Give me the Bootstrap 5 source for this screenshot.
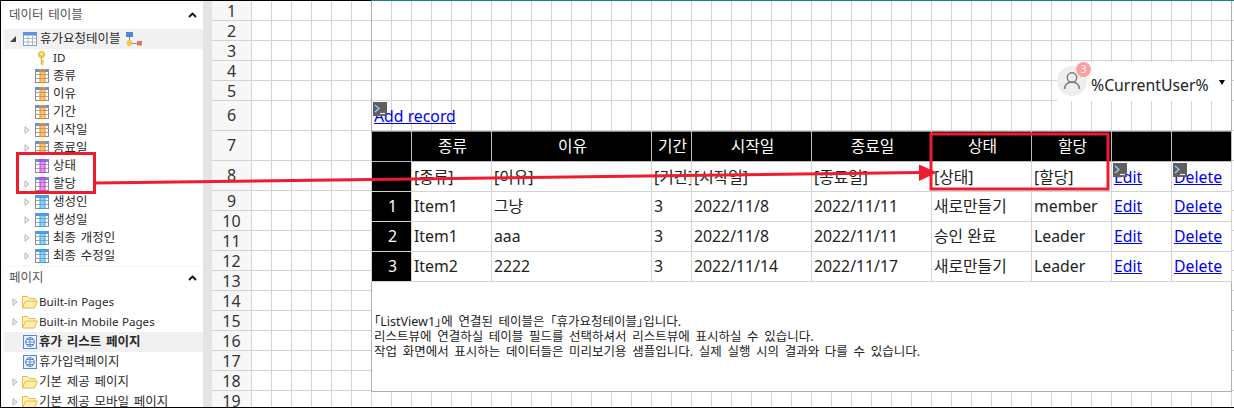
<!DOCTYPE html>
<html lang="ko">
<head>
<meta charset="utf-8">
<title>데이터 테이블</title>
<link href="https://cdn.jsdelivr.net/npm/bootstrap@5.3.0/dist/css/bootstrap.min.css" rel="stylesheet">
<style>
html,body{height:100%;margin:0;overflow:hidden;background:#fff}
body{font-family:"Noto Sans","Noto Sans CJK KR",sans-serif;color:#222}
.app{width:1234px;height:408px;background:#000;padding-top:1px;border-left:1px solid #000;border-bottom:1px solid #000;overflow:hidden;position:relative}
.top-accent{position:absolute;left:370px;right:0;top:0;height:1px;background:#16809f}
.pane{width:202px;flex:none;background:#fafafa;padding:3px 0 0 3px;font-size:12.5px;line-height:18px;word-spacing:1.5px}
.pane-head{height:21px;flex:none;padding:0 6px 0 5px;background:#fff;color:#555}
.pane-body{background:#fff;padding-top:4px;flex:none}
.pane-gap{height:2px;flex:none}
.node{height:18px;white-space:nowrap;color:#2a2a2a}
.node.tall{height:20px}
.node.sel{background:#f1f1f1}
.node.strong{font-weight:700}
.latin{font-size:11.6px;word-spacing:.5px}
.arrow{width:6px;height:8px;flex:none}
.lv1{padding-left:6px}
.lv2{padding-left:18px}
.lv2 .arrow{margin:0 5px 0 2px}
.lv2 .noarrow{width:13px;flex:none}
.col-ico{width:14px;height:14px;flex:none;margin-right:4px}
.key-ico{width:7px;height:14px;flex:none;margin:0 8px 0 3px}
.branch{padding-left:8px}
.leaf{padding-left:19px}
.leaf svg{margin-right:2px}
.branch .fold-ico{margin-right:1px}
.orange{color:#f28c1c}.purple{color:#c23fe0}.sky{color:#38a8ea}
.splitter{width:9px;flex:none;background:#e4e4e4}
.work{position:relative;flex:1 1 auto;min-width:0;background:#fff repeating-linear-gradient(90deg,transparent 0 19px,#d3d3d3 19px 20px)}
.sheet-row{border-bottom:1px solid #d3d3d3;height:20px;flex:none}
.sheet-row.big{height:30px}
.rowhead{width:40px;height:100%;background:#f7f7f7;border-right:1px solid #d3d3d3;text-align:center;font-size:16px;line-height:21px;color:#333}
.sheet-row.big .rowhead{line-height:29px}
.lv-panel{position:absolute;left:159px;top:0;width:861px;height:391px;border-left:1px solid #b0b0b0;border-right:1px solid #b0b0b0;border-bottom:1px solid #b0b0b0}
.spacer-top{height:61px;flex:none}
.user-box{height:39px;flex:none;width:174px;margin-left:auto;background:#fff;position:relative;font-size:15.8px;color:#222}
.avatar{position:absolute;left:0;top:4px;width:30px;height:30px;border-radius:50%;background:#eee}
.notif{position:absolute;left:19px;top:0;width:15px;height:15px;border-radius:50%;background:#ff9d9d;color:#fff;font-size:10px;line-height:15px;text-align:center}
.user-name{position:absolute;left:34px;top:11px;line-height:24px;white-space:nowrap}
.caret-down{position:absolute;left:162px;top:18px;width:0;height:0;border-left:3px solid transparent;border-right:3px solid transparent;border-top:5px solid #000}
.add-row{height:31px;flex:none;position:relative;padding:3px 0 0 2px;font-size:15.8px;line-height:24px}
.lnk{color:#0000ee;text-decoration:underline}
.term{position:absolute;width:14px;height:14px;display:block}
.add-row .term{left:1px;top:1px}
.lv-table{--bs-table-bg:#fff;--bs-table-color:#222;--bs-border-color:#d3d3d3;table-layout:fixed;width:860px;margin:-1px 0 0 -1px;font-size:15.8px;border-collapse:collapse;flex:none}
.lv-table th,.lv-table td{height:30px;padding:0 0 2px 2px;line-height:26px;white-space:nowrap;overflow:hidden;vertical-align:middle;font-weight:400;border:1px solid #d3d3d3}
.lv-table tbody tr:first-child td{padding-bottom:0}
.lv-table thead th{--bs-table-bg:#000;--bs-table-color:#fff;background:#000;color:#fff;text-align:center;border-color:#bbb;border-top-color:#888}
.lv-table .num{background:#000;--bs-table-bg:#000;--bs-table-color:#fff;color:#fff;text-align:center}
.lv-table .act{position:relative;overflow:visible}
.act .term{left:1px;top:1px}
.note{flex:1 1 auto;background:#fff;padding:32px 0 0 2px;font-size:12.5px;line-height:15px;color:#222;white-space:nowrap;word-spacing:2.4px}
.bk{font-feature-settings:"palt"}
.ann{position:absolute;left:-1px;top:0;pointer-events:none}
</style>
</head>
<body>
<svg width="0" height="0" class="position-absolute">
<defs>
<symbol id="col" viewBox="0 0 14 14"><rect x=".5" y=".5" width="13" height="13" fill="#fff" stroke="#8b8b8b"/><path d="M1 5.5h12M1 9.5h12" stroke="#a5a5a5"/><rect x="0" y="0" width="14" height="3" fill="#5f93dd"/><rect x="5" y="0.5" width="5" height="13" fill="currentColor" fill-opacity=".55" stroke="currentColor"/></symbol>
<symbol id="tbl" viewBox="0 0 14 14"><rect x=".5" y=".5" width="13" height="13" fill="#fff" stroke="#7f9ec9"/><rect x="0" y="0" width="14" height="3.5" fill="#5f93dd"/><path d="M1 6.5h12M1 10h12M5 3.5v10M9.500 3.5v10" stroke="#b5b5b5"/></symbol>
<symbol id="arr" viewBox="0 0 6 8"><path d="M1 .7 5 4 1 7.300Z" fill="#eee" stroke="#b5b5b5"/></symbol>
<symbol id="fold" viewBox="0 0 16 14"><path d="M.5 13V1.500h5l1.500 2h6V6" fill="#fff3c4" stroke="#e8bb45"/><path d="M.5 13 3.500 6h12l-3 7Z" fill="#fdeeb0" stroke="#e8bb45"/></symbol>
<symbol id="page" viewBox="0 0 14 14"><rect x=".5" y=".5" width="13" height="13" fill="#e8f1fd" stroke="#4d8ae0"/><circle cx="7" cy="7" r="4.300" fill="#fff" stroke="#3f78c8"/><path d="M2.700 7h8.600M7 2.700v8.600M4 4.500h6M4 9.500h6" stroke="#3f78c8" stroke-width=".8"/></symbol>
<symbol id="prompt" viewBox="0 0 14 14"><rect width="14" height="14" fill="#5f5f5f"/><path d="M2 3l4 3.500-4 3.500" fill="none" stroke="#8fd0ff" stroke-width="1.300"/><path d="M7 11.500h5" stroke="#e8e8e8" stroke-width="1.200"/></symbol>
</defs>
</svg>
<div class="app d-flex">
  <aside class="pane d-flex flex-column">
    <div class="pane-head d-flex justify-content-between align-items-center"><span>데이터 테이블</span>
      <svg width="9" height="6" viewBox="0 0 9 6"><path d="M1 5 4.500 1.500 8 5" fill="none" stroke="#111" stroke-width="1.800"/></svg></div>
    <div class="pane-body">
      <div class="node tall sel lv1 d-flex align-items-center">
        <svg style="margin-right:7px" width="6" height="6" viewBox="0 0 6 6"><path d="M6 0v6H0Z" fill="#444"/></svg>
        <svg width="14" height="14" style="margin-right:3px"><use href="#tbl"/></svg><span>휴가요청테이블</span>
        <svg class="ms-1" width="17" height="15" viewBox="0 0 17 15"><rect x="1" y="0" width="7" height="5" fill="#4f84d6"/><path d="M4.500 5v5M7 11.500h7" stroke="#7d8fa8"/><circle cx="4.500" cy="11" r="3" fill="#f3c746"/><rect x="12" y="9" width="5" height="4.500" fill="#e07a55"/></svg>
      </div>
      <div class="node lv2 d-flex align-items-center"><span class="noarrow"></span>
        <svg class="key-ico" viewBox="0 0 7 14"><circle cx="3.500" cy="3.500" r="3" fill="#f6d04d" stroke="#e0ae2c"/><circle cx="3.500" cy="2.800" r="1" fill="#fff"/><path d="M3.500 6v7.500M3.500 10.500h2.500M3.500 13h2" stroke="#e6b534" stroke-width="1.500" fill="none"/></svg>
        <span class="latin">ID</span></div>
      <div class="node lv2 d-flex align-items-center"><span class="noarrow"></span><svg class="col-ico orange"><use href="#col"/></svg><span>종류</span></div>
      <div class="node lv2 d-flex align-items-center"><span class="noarrow"></span><svg class="col-ico orange"><use href="#col"/></svg><span>이유</span></div>
      <div class="node lv2 d-flex align-items-center"><span class="noarrow"></span><svg class="col-ico orange"><use href="#col"/></svg><span>기간</span></div>
      <div class="node lv2 d-flex align-items-center"><svg class="arrow"><use href="#arr"/></svg><svg class="col-ico orange"><use href="#col"/></svg><span>시작일</span></div>
      <div class="node lv2 d-flex align-items-center"><svg class="arrow"><use href="#arr"/></svg><svg class="col-ico orange"><use href="#col"/></svg><span>종료일</span></div>
      <div class="node lv2 d-flex align-items-center"><span class="noarrow"></span><svg class="col-ico purple"><use href="#col"/></svg><span>상태</span></div>
      <div class="node lv2 d-flex align-items-center"><svg class="arrow"><use href="#arr"/></svg><svg class="col-ico purple"><use href="#col"/></svg><span>할당</span></div>
      <div class="node lv2 d-flex align-items-center"><svg class="arrow"><use href="#arr"/></svg><svg class="col-ico sky"><use href="#col"/></svg><span>생성인</span></div>
      <div class="node lv2 d-flex align-items-center"><svg class="arrow"><use href="#arr"/></svg><svg class="col-ico sky"><use href="#col"/></svg><span>생성일</span></div>
      <div class="node lv2 d-flex align-items-center"><svg class="arrow"><use href="#arr"/></svg><svg class="col-ico sky"><use href="#col"/></svg><span>최종 개정인</span></div>
      <div class="node lv2 d-flex align-items-center"><svg class="arrow"><use href="#arr"/></svg><svg class="col-ico sky"><use href="#col"/></svg><span>최종 수정일</span></div>
    </div>
    <div class="pane-gap"></div>
    <div class="pane-head d-flex justify-content-between align-items-center"><span>페이지</span>
      <svg width="9" height="6" viewBox="0 0 9 6"><path d="M1 5 4.500 1.500 8 5" fill="none" stroke="#111" stroke-width="1.800"/></svg></div>
    <div class="pane-body flex-grow-1">
      <div class="node tall branch d-flex align-items-center"><svg class="arrow me-1"><use href="#arr"/></svg><svg class="fold-ico" width="16" height="14"><use href="#fold"/></svg><span class="latin">Built-in Pages</span></div>
      <div class="node tall branch d-flex align-items-center"><svg class="arrow me-1"><use href="#arr"/></svg><svg class="fold-ico" width="16" height="14"><use href="#fold"/></svg><span class="latin">Built-in Mobile Pages</span></div>
      <div class="node tall sel strong leaf d-flex align-items-center"><svg width="14" height="14"><use href="#page"/></svg><span>휴가 리스트 페이지</span></div>
      <div class="node tall leaf d-flex align-items-center"><svg width="14" height="14"><use href="#page"/></svg><span>휴가입력페이지</span></div>
      <div class="node tall branch d-flex align-items-center"><svg class="arrow me-1"><use href="#arr"/></svg><svg class="fold-ico" width="16" height="14"><use href="#fold"/></svg><span>기본 제공 페이지</span></div>
      <div class="node tall branch d-flex align-items-center"><svg class="arrow me-1"><use href="#arr"/></svg><svg class="fold-ico" width="16" height="14"><use href="#fold"/></svg><span>기본 제공 모바일 페이지</span></div>
    </div>
  </aside>
  <div class="splitter"></div>
  <main class="work d-flex flex-column overflow-hidden">
    <div class="sheet-row"><div class="rowhead">1</div></div>
    <div class="sheet-row"><div class="rowhead">2</div></div>
    <div class="sheet-row"><div class="rowhead">3</div></div>
    <div class="sheet-row"><div class="rowhead">4</div></div>
    <div class="sheet-row"><div class="rowhead">5</div></div>
    <div class="sheet-row big"><div class="rowhead">6</div></div>
    <div class="sheet-row big"><div class="rowhead">7</div></div>
    <div class="sheet-row big"><div class="rowhead">8</div></div>
    <div class="sheet-row"><div class="rowhead">9</div></div>
    <div class="sheet-row"><div class="rowhead">10</div></div>
    <div class="sheet-row"><div class="rowhead">11</div></div>
    <div class="sheet-row"><div class="rowhead">12</div></div>
    <div class="sheet-row"><div class="rowhead">13</div></div>
    <div class="sheet-row"><div class="rowhead">14</div></div>
    <div class="sheet-row"><div class="rowhead">15</div></div>
    <div class="sheet-row"><div class="rowhead">16</div></div>
    <div class="sheet-row"><div class="rowhead">17</div></div>
    <div class="sheet-row"><div class="rowhead">18</div></div>
    <div class="sheet-row"><div class="rowhead">19</div></div>
    <section class="lv-panel d-flex flex-column">
      <div class="spacer-top"></div>
      <div class="user-box">
        <div class="avatar"><svg width="30" height="30" viewBox="0 0 30 30"><circle cx="15" cy="11.500" r="4.700" fill="none" stroke="#777" stroke-width="1.400"/><path d="M7.500 23c.6-5 3.500-7 7.500-7s6.900 2 7.500 7" fill="none" stroke="#777" stroke-width="1.400"/></svg></div>
        <div class="notif">3</div>
        <div class="user-name">%CurrentUser%</div>
        <span class="caret-down"></span>
      </div>
      <div class="add-row"><a class="lnk" href="#">Add record</a><svg class="term"><use href="#prompt"/></svg></div>
      <table class="table table-bordered lv-table">
        <colgroup><col style="width:40px"><col style="width:80px"><col style="width:160px"><col style="width:40px"><col style="width:120px"><col style="width:120px"><col style="width:100px"><col style="width:80px"><col style="width:60px"><col style="width:60px"></colgroup>
        <thead><tr><th></th><th>종류</th><th>이유</th><th>기간</th><th>시작일</th><th>종료일</th><th>상태</th><th>할당</th><th></th><th></th></tr></thead>
        <tbody>
          <tr><td class="num"></td><td>[종류]</td><td>[이유]</td><td>[기간]</td><td>[시작일]</td><td>[종료일]</td><td>[상태]</td><td>[할당]</td><td class="act"><a class="lnk" href="#">Edit</a><svg class="term"><use href="#prompt"/></svg></td><td class="act"><a class="lnk" href="#">Delete</a><svg class="term"><use href="#prompt"/></svg></td></tr>
          <tr><td class="num">1</td><td>Item1</td><td>그냥</td><td>3</td><td>2022/11/8</td><td>2022/11/11</td><td>새로만들기</td><td>member</td><td><a class="lnk" href="#">Edit</a></td><td><a class="lnk" href="#">Delete</a></td></tr>
          <tr><td class="num">2</td><td>Item1</td><td>aaa</td><td>3</td><td>2022/11/8</td><td>2022/11/11</td><td>승인 완료</td><td>Leader</td><td><a class="lnk" href="#">Edit</a></td><td><a class="lnk" href="#">Delete</a></td></tr>
          <tr><td class="num">3</td><td>Item2</td><td>2222</td><td>3</td><td>2022/11/14</td><td>2022/11/17</td><td>새로만들기</td><td>Leader</td><td><a class="lnk" href="#">Edit</a></td><td><a class="lnk" href="#">Delete</a></td></tr>
        </tbody>
      </table>
      <div class="note"><span class="bk">「</span>ListView1<span class="bk">」</span>에 연결된 테이블은 <span class="bk">「</span>휴가요청테이블<span class="bk">」</span>입니다.<br>리스트뷰에 연결하실 테이블 필드를 선택하셔서 리스트뷰에 표시하실 수 있습니다.<br>작업 화면에서 표시하는 데이터들은 미리보기용 샘플입니다. 실제 실행 시의 결과와 다를 수 있습니다.</div>
    </section>
  </main>
  <div class="top-accent"></div>
  <svg class="ann" width="1234" height="408" viewBox="0 0 1234 408">
    <g fill="none" stroke="#ed1c2e" stroke-width="3">
      <rect x="17.500" y="153.500" width="77" height="39"/>
      <rect x="931" y="134" width="177" height="55"/>
      <path d="M95 183 921 172.500"/>
    </g>
    <path d="M919 164.500 937 172.500 919 181Z" fill="#ed1c2e"/>
  </svg>
</div>
<script src="https://cdn.jsdelivr.net/npm/bootstrap@5.3.0/dist/js/bootstrap.bundle.min.js"></script>
</body>
</html>
